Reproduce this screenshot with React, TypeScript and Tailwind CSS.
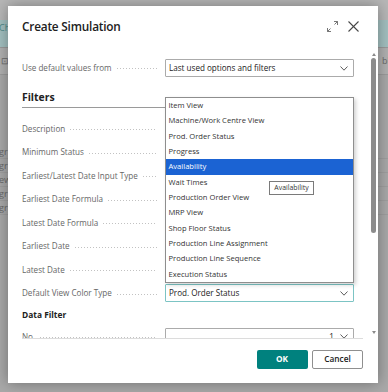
import React from 'react';

const Chevron: React.FC = () => (
    <svg width="8" height="5" viewBox="0 0 8 5" className="shrink-0">
        <polyline points="0.5,0.5 4,4.2 7.5,0.5" fill="none" stroke="#5c5c5c" strokeWidth="1" />
    </svg>
);

// label with the dotted leader that runs to the value column
const FieldRow: React.FC<{ label: string; children?: React.ReactNode; className?: string }> = ({ label, children, className }) => (
    <div className={`flex items-center ${className ?? 'h-[23.5px]'}`}>
        <div className="w-[135px] flex items-center shrink-0">
            <span className="text-[8.1px] text-[#666666] whitespace-nowrap">{label}</span>
            <div className="flex-1 ml-[5px] mt-[2px] h-px bg-[linear-gradient(to_right,#c2c2c2_1px,transparent_1px)] bg-[length:3px_1px]" />
        </div>
        <div className="ml-[8px] w-[189px]">{children}</div>
    </div>
);

const SelectBox: React.FC<{ value?: string; focused?: boolean; right?: boolean }> = ({ value, focused, right }) => (
    <div
        className={`h-[18px] flex items-center pl-[3px] pr-[5px] rounded-[1px] bg-white border ${focused ? 'border-[#7cc4c4]' : 'border-[#ababab]'}`}
    >
        <span className={`flex-1 text-[8.1px] text-[#212121] whitespace-nowrap ${right ? 'text-right pr-[6px]' : ''}`}>{value}</span>
        <Chevron />
    </div>
);

const VIEW_OPTIONS = [
    'Item View',
    'Machine/Work Centre View',
    'Prod. Order Status',
    'Progress',
    'Availability',
    'Wait Times',
    'Production Order View',
    'MRP View',
    'Shop Floor Status',
    'Production Line Assignment',
    'Production Line Sequence',
    'Execution Status',
];

const FILTER_FIELDS = [
    'Description',
    'Minimum Status',
    'Earliest/Latest Date Input Type',
    'Earliest Date Formula',
    'Latest Date Formula',
    'Earliest Date',
    'Latest Date',
];

const BackgroundPage: React.FC = () => (
    <div className="w-full h-full flex flex-col bg-[#a9a9a9] text-[9px]">
        <div className="h-[20px] bg-[#b7b7b7]" />
        <div className="h-[28px] bg-[#a3c0c0] flex items-center justify-between text-[#4f8a8a] border-b border-[#9a9a9a]">
            <span className="-ml-[1px] -mt-[12px]">Ch</span>
        </div>
        <div className="h-[27px] bg-[#b1b1b1] flex items-center justify-between border-b border-[#9c9c9c] text-[#6a6a6a]">
            <span className="ml-[1px]">⊡</span>
            <span className="mr-[-4px]">bli</span>
        </div>
        <div className="h-[70px]" />
        <div className="flex flex-col text-[#6a6a6a]">
            {['gr', 'gr', 'ew', 'gr', 'gr'].map((t, i) => (
                <div key={i} className="h-[14px] flex items-center border-b border-[#9f9f9f] -ml-[1px]">{t}</div>
            ))}
        </div>
    </div>
);

const App: React.FC = () => {
    return (
        <div className="w-[388px] h-[392px] relative overflow-hidden font-['Segoe_UI','Open_Sans',sans-serif]">
            <BackgroundPage />

            {/* modal */}
            <div className="absolute left-[8px] top-[6px] w-[370px] h-[377px] bg-white shadow-[0_0_14px_rgba(0,0,0,0.35)] flex flex-col">
                <div className="h-[44px] flex items-start pl-[14px] pr-[19px] pt-[12px]">
                    <h1 className="flex-1 text-[11.8px] leading-[16px] font-semibold tracking-[-0.2px] text-[#212121]">Create Simulation</h1>
                    <div className="flex items-center gap-[10px] mt-[3px]">
                        <svg width="11" height="11" viewBox="0 0 11 11" fill="none" stroke="#666666" strokeWidth="0.9">
                            <polyline points="7,0.5 10.5,0.5 10.5,4" />
                            <line x1="10.5" y1="0.5" x2="7.5" y2="3.5" />
                            <polyline points="0.5,7 0.5,10.5 4,10.5" />
                            <line x1="0.5" y1="10.5" x2="3.5" y2="7.5" />
                        </svg>
                        <svg width="11" height="11" viewBox="0 0 11 11" fill="none" stroke="#474747" strokeWidth="1.1">
                            <line x1="0.5" y1="0.5" x2="10.5" y2="10.5" />
                            <line x1="10.5" y1="0.5" x2="0.5" y2="10.5" />
                        </svg>
                    </div>
                </div>

                {/* scrolling content */}
                <div className="h-[288px] flex overflow-hidden">
                    <div className="w-[360px] pl-[14px] pr-[14px] pt-[9px]">
                        <FieldRow label="Use default values from" className="h-[18px]">
                            <SelectBox value="Last used options and filters" />
                        </FieldRow>

                        <div className="mt-[13px] pb-[3px] border-b border-[#9a9a9a]">
                            <h2 className="text-[10.4px] leading-[14px] font-bold text-[#212121]">Filters</h2>
                        </div>

                        <div className="mt-[9px]">
                            {FILTER_FIELDS.map(f => (
                                <FieldRow key={f} label={f}>
                                    <div className="h-[18px] border border-[#ababab]" />
                                </FieldRow>
                            ))}
                            <FieldRow label="Default View Color Type">
                                <SelectBox value="Prod. Order Status" focused />
                            </FieldRow>
                            <div className="h-[20px] flex items-center">
                                <h3 className="text-[8.4px] font-bold text-[#212121]">Data Filter</h3>
                            </div>
                            <FieldRow label="No.">
                                <SelectBox value="1" right />
                            </FieldRow>
                        </div>
                    </div>

                    {/* scrollbar */}
                    <div className="w-[10px] flex flex-col items-center pt-[3px] pl-[1px]">
                        <div className="w-0 h-0 border-l-[2.5px] border-r-[2.5px] border-b-[3px] border-l-transparent border-r-transparent border-b-[#8a8a8a]" />
                        <div className="mt-[2px] w-[4.5px] h-[175px] rounded-full bg-[#8c8c8c]" />
                        <div className="mt-[98px] w-0 h-0 border-l-[2.5px] border-r-[2.5px] border-t-[3px] border-l-transparent border-r-transparent border-t-[#8a8a8a]" />
                    </div>
                </div>

                <div className="flex-1 mx-[14px] mr-[15px] border-t border-[#dcdcdc] flex justify-end items-start pt-[11px] gap-[4.5px]">
                    <button className="w-[51px] h-[19px] rounded-[2px] bg-[#00817e] text-white text-[8.3px] font-bold">OK</button>
                    <button className="w-[51px] h-[19px] rounded-[2px] bg-white border border-[#8f8f8f] text-[#212121] text-[8.3px] font-semibold">Cancel</button>
                </div>

                {/* open option list */}
                <div className="absolute left-[157px] top-[91px] w-[189px] h-[186px] bg-white border border-[#8e8e8e] shadow-[2px_2px_4px_rgba(0,0,0,0.18)] flex flex-col">
                    {VIEW_OPTIONS.map(opt => (
                        <div
                            key={opt}
                            className={`h-[15.33px] flex items-center pl-[2.5px] text-[7.6px] whitespace-nowrap ${opt === 'Availability' ? 'bg-[#1b63d3] text-white' : 'text-[#333333]'}`}
                        >
                            {opt}
                        </div>
                    ))}
                </div>

                {/* tooltip */}
                <div className="absolute left-[261px] top-[175px] w-[45px] h-[13.5px] bg-white border border-[#7a7a7a] flex items-center justify-center text-[6.9px] text-[#333333]">
                    Availability
                </div>
            </div>
        </div>
    );
};

export default App;
